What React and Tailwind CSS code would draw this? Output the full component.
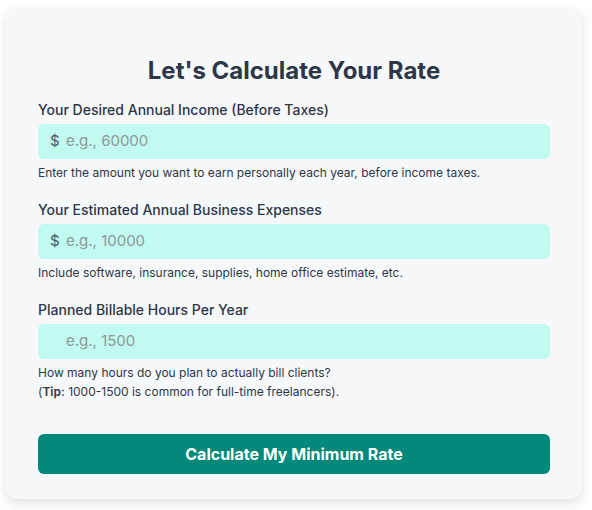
export default function App() {
  const font = { fontFamily: "Inter, 'Noto Sans', sans-serif" };
  return (
    <div className="min-h-[510px] bg-white pt-2 pl-[6px]" style={font}>
      <div className="w-[576px] rounded-xl bg-[#f7f8fa] px-8 pt-[47px] pb-[25px] shadow-[0_4px_12px_rgba(0,0,0,0.12)]">
        <h1 className="text-center text-2xl leading-8 font-bold text-[#2d3748] mb-[13px]">Let's Calculate Your Rate</h1>

        <div className="mb-[19px]">
          <label className="block text-sm leading-5 font-medium text-[#2d3748] mb-1">Your Desired Annual Income (Before Taxes)</label>
          <div className="flex h-[35px] items-center rounded-md bg-[#c1faee] pl-3">
            <span className="w-4 text-[15px] text-[#4a5568]">$</span>
            <span className="text-[15px] text-[#8f989b]">e.g., 60000</span>
          </div>
          <p className="mt-1.5 text-xs leading-4 text-[#2d3748]">Enter the amount you want to earn personally each year, before income taxes.</p>
        </div>

        <div className="mb-[19px]">
          <label className="block text-sm leading-5 font-medium text-[#2d3748] mb-1">Your Estimated Annual Business Expenses</label>
          <div className="flex h-[35px] items-center rounded-md bg-[#c1faee] pl-3">
            <span className="w-4 text-[15px] text-[#4a5568]">$</span>
            <span className="text-[15px] text-[#8f989b]">e.g., 10000</span>
          </div>
          <p className="mt-1.5 text-xs leading-4 text-[#2d3748]">Include software, insurance, supplies, home office estimate, etc.</p>
        </div>

        <div>
          <label className="block text-sm leading-5 font-medium text-[#2d3748] mb-1">Planned Billable Hours Per Year</label>
          <div className="flex h-[35px] items-center rounded-md bg-[#c1faee] pl-3">
            <span className="w-4"></span>
            <span className="text-[15px] text-[#8f989b]">e.g., 1500</span>
          </div>
          <p className="mt-[4px] text-xs leading-[19px] text-[#2d3748]">
            How many hours do you plan to actually bill clients?<br />
            (<b className="font-semibold">Tip:</b> 1000-1500 is common for full-time freelancers).
          </p>
        </div>

        <button className="mt-[33px] flex h-[40px] w-full items-center justify-center rounded-md bg-[#03897a] text-base font-bold text-white">Calculate My Minimum Rate</button>
      </div>
    </div>
  );
}
